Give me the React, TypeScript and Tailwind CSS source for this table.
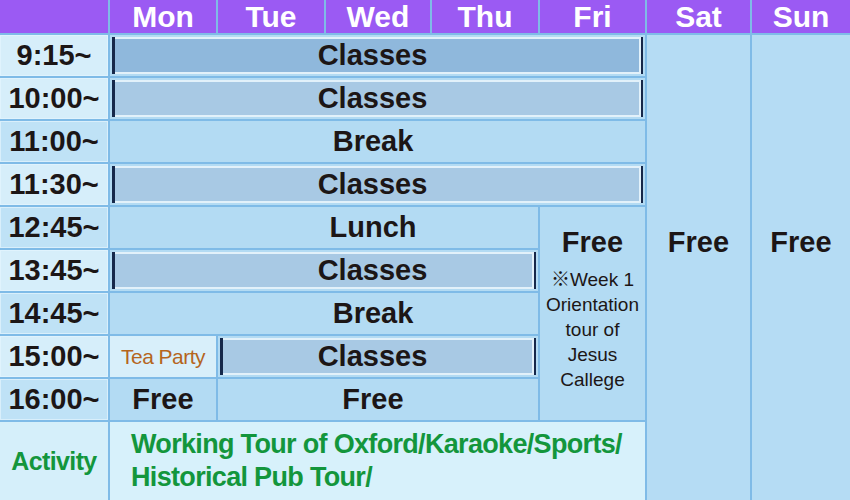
const font = { fontFamily: '"Liberation Sans", Arial, "Noto Sans CJK JP", sans-serif' };

const days = ['Mon', 'Tue', 'Wed', 'Thu', 'Fri', 'Sat', 'Sun'];

const times = [
  { label: '9:15~', light: true },
  { label: '10:00~', light: true },
  { label: '11:00~', light: false },
  { label: '11:30~', light: true },
  { label: '12:45~', light: false },
  { label: '13:45~', light: true },
  { label: '14:45~', light: false },
  { label: '15:00~', light: true },
  { label: '16:00~', light: false },
];

const rowStart = [
  'row-start-2',
  'row-start-3',
  'row-start-4',
  'row-start-5',
  'row-start-6',
  'row-start-7',
  'row-start-8',
  'row-start-9',
  'row-start-10',
];

// Bar for "Classes" rows: dark edges left/right, light frame inside
function ClassBar({ dark = false, pad = '' }: { dark?: boolean; pad?: string }) {
  return (
    <div className="h-full p-[2px]">
      <div className="h-full border-l-[3px] border-r-[2px] border-[#16284a]">
        <div
          className={`h-full border-2 border-l-0 border-[#e2f1fa] flex items-center justify-center ${pad} ${
            dark ? 'bg-[#8fb8dc]' : 'bg-[#a8c9e4]'
          }`}
        >
          <span className="text-[29px] font-bold text-[#1c1616] leading-none">Classes</span>
        </div>
      </div>
    </div>
  );
}

function Label({ text, pad = '' }: { text: string; pad?: string }) {
  return (
    <div className={`h-full flex items-center justify-center ${pad}`}>
      <span className="text-[29px] font-bold text-[#1c1616] leading-none">{text}</span>
    </div>
  );
}

export default function App() {
  return (
    <div style={font} className="w-[850px] h-[500px] overflow-hidden bg-[#7fbbe7]">
      <div className="grid grid-cols-[108px_106px_106px_104px_106px_105px_103px_98px] grid-rows-[33px_repeat(9,41px)_78px] gap-[2px]">
        {/* Header */}
        <div className="col-start-1 row-start-1 bg-[#9b5af3]" />
        {days.map((d) => (
          <div key={d} className="row-start-1 bg-[#9b5af3] flex items-center justify-center">
            <span className="text-[30px] font-bold text-white leading-none">{d}</span>
          </div>
        ))}

        {/* Time column */}
        {times.map((t, i) => (
          <div
            key={t.label}
            className={`col-start-1 ${rowStart[i]} flex items-center justify-center border border-[#e4f5fd]/70 ${
              t.light ? 'bg-[#d6eefa]' : 'bg-[#bfe2f6]'
            }`}
          >
            <span className="text-[29px] font-bold text-[#1c1616] leading-none">{t.label}</span>
          </div>
        ))}

        {/* Sat / Sun */}
        <div className="col-start-7 row-start-2 row-span-10 bg-[#b5dcf4] flex justify-center pt-[193px]">
          <span className="text-[29px] font-bold text-[#1c1616] leading-none">Free</span>
        </div>
        <div className="col-start-8 row-start-2 row-span-10 bg-[#b5dcf4] flex justify-center pt-[193px]">
          <span className="text-[29px] font-bold text-[#1c1616] leading-none">Free</span>
        </div>

        {/* Mon-Fri rows */}
        <div className="col-start-2 col-span-5 row-start-2 bg-[#b3dbf3]">
          <ClassBar dark pad="pr-[9px]" />
        </div>
        <div className="col-start-2 col-span-5 row-start-3 bg-[#b3dbf3]">
          <ClassBar pad="pr-[9px]" />
        </div>
        <div className="col-start-2 col-span-5 row-start-4 bg-[#b3dbf3]">
          <Label text="Break" pad="pr-[9px]" />
        </div>
        <div className="col-start-2 col-span-5 row-start-5 bg-[#b3dbf3]">
          <ClassBar pad="pr-[9px]" />
        </div>
        <div className="col-start-2 col-span-4 row-start-6 bg-[#b3dbf3]">
          <Label text="Lunch" pad="pl-[98px]" />
        </div>
        <div className="col-start-2 col-span-4 row-start-7 bg-[#b3dbf3]">
          <ClassBar pad="pl-[98px]" />
        </div>
        <div className="col-start-2 col-span-4 row-start-8 bg-[#b3dbf3]">
          <Label text="Break" pad="pl-[98px]" />
        </div>
        <div className="col-start-2 row-start-9 bg-[#d8effa] flex items-center justify-center">
          <span className="text-[21px] text-[#b5651d] leading-none tracking-tight">Tea Party</span>
        </div>
        <div className="col-start-3 col-span-3 row-start-9 bg-[#b3dbf3]">
          <ClassBar pad="pr-[10px]" />
        </div>
        <div className="col-start-2 row-start-10 bg-[#b3dbf3]">
          <Label text="Free" />
        </div>
        <div className="col-start-3 col-span-3 row-start-10 bg-[#b3dbf3]">
          <Label text="Free" pad="pr-[10px]" />
        </div>

        {/* Friday afternoon */}
        <div className="col-start-6 row-start-6 row-span-5 bg-[#b3dbf3] flex flex-col items-center pt-[20px]">
          <span className="text-[29px] font-bold text-[#1c1616] leading-[30px]">Free</span>
          <div className="text-[19px] text-[#1c1616] leading-[25px] text-center mt-[10px]">
            <div>※Week 1</div>
            <div>Orientation</div>
            <div>tour of</div>
            <div>Jesus</div>
            <div>Callege</div>
          </div>
        </div>

        {/* Activity */}
        <div className="col-start-1 row-start-11 bg-[#d5effa] flex items-center justify-center">
          <span className="text-[25px] font-bold text-[#13963c] leading-none tracking-tight">Activity</span>
        </div>
        <div className="col-start-2 col-span-5 row-start-11 bg-[#d7f1fb] pl-[21px] pt-[6px]">
          <div className="text-[27px] font-bold text-[#13963c] leading-[33px] tracking-tight">
            <div>Working Tour of Oxford/Karaoke/Sports/</div>
            <div>Historical Pub Tour/</div>
          </div>
        </div>
      </div>
    </div>
  );
}
